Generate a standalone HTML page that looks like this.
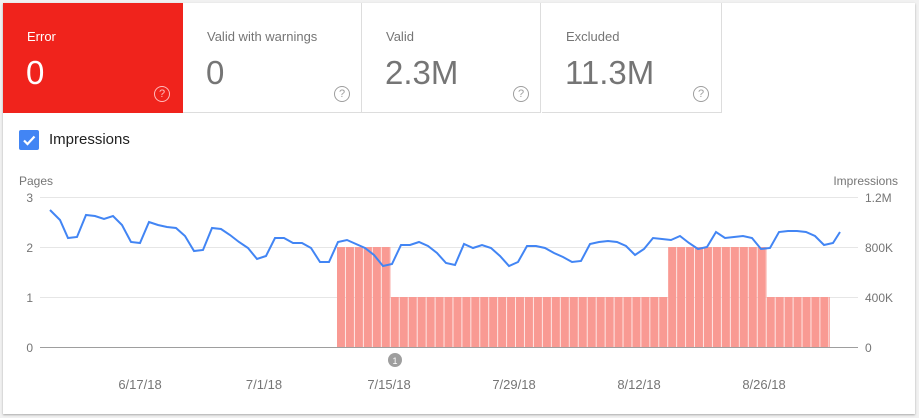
<!DOCTYPE html>
<html><head><meta charset="utf-8"><style>
body{margin:0;width:919px;height:418px;background:#f1f1f1;font-family:"Liberation Sans",Arial,sans-serif;overflow:hidden;position:relative}
.card{position:absolute;left:3px;top:3px;width:912px;height:411px;background:#fff;box-shadow:0 1px 2px rgba(0,0,0,.3)}
.tile{position:absolute;top:3px;height:110px;width:179px;border-right:1px solid #ddd;border-bottom:1px solid #ddd;box-sizing:border-box;color:#757575}
.tile .l{position:absolute;left:24px;top:26px;font-size:13px}
.tile .v{position:absolute;left:23px;top:51px;font-size:33px}
.tile .q{position:absolute;left:151px;top:83px;width:14px;height:14px;border:1.3px solid #9e9e9e;border-radius:50%;font-size:11px;text-align:center;line-height:14px;color:#9e9e9e}
</style></head><body>
<div class="card"></div>
<div class="tile" style="left:3px;background:#f0231c;color:#fff;border:none;width:180px"><div class="l">Error</div><div class="v">0</div><div class="q" style="border-color:#fbb;color:#fbb">?</div></div>
<div class="tile" style="left:183px"><div class="l">Valid with warnings</div><div class="v">0</div><div class="q">?</div></div>
<div class="tile" style="left:362px"><div class="l">Valid</div><div class="v">2.3M</div><div class="q">?</div></div>
<div class="tile" style="left:542px;width:180px"><div class="l">Excluded</div><div class="v">11.3M</div><div class="q">?</div></div>
<div style="position:absolute;left:19px;top:130px;width:20px;height:20px;background:#4285f4;border-radius:2px"></div>
<svg style="position:absolute;left:19px;top:130px" width="20" height="20"><path d="M5 10.5l3.5 3.5 7-7.5" stroke="#fff" stroke-width="2.2" fill="none"/></svg>
<div style="position:absolute;left:49px;top:131px;font-size:15px;color:#212121">Impressions</div>
<svg style="position:absolute;left:0;top:0" width="919" height="418" font-family="Liberation Sans, Arial, sans-serif" font-size="12" fill="#757575">
<defs><pattern id="b" x="337" y="0" width="8.95" height="418" patternUnits="userSpaceOnUse"><rect x="0" y="0" width="8.2" height="418" fill="#f99a93"/></pattern></defs>
<text x="19" y="185">Pages</text>
<text x="898" y="185" text-anchor="end">Impressions</text>
<g stroke="#e6e6e6"><line x1="40" y1="197.5" x2="858" y2="197.5"/><line x1="40" y1="247.5" x2="858" y2="247.5"/><line x1="40" y1="297.5" x2="858" y2="297.5"/></g>
<line x1="40" y1="347.5" x2="858" y2="347.5" stroke="#9e9e9e"/>
<g text-anchor="end"><text x="33" y="202">3</text><text x="33" y="252">2</text><text x="33" y="302">1</text><text x="33" y="352">0</text></g>
<text x="865" y="202">1.2M</text><text x="865" y="252">800K</text><text x="865" y="302">400K</text><text x="865" y="352">0</text>
<rect x="337" y="247" width="54" height="100" fill="url(#b)"/>
<rect x="391" y="297" width="277" height="50" fill="url(#b)"/>
<rect x="668" y="247" width="99" height="100" fill="url(#b)"/>
<rect x="767" y="297" width="63" height="50" fill="url(#b)"/>
<polyline fill="none" stroke="#4285f4" stroke-width="2" points="50,210 60,220 68,238 77,237 86,215 95,216 104,219 113,216 122,225 131,242 140,243 149,222 158,225 167,227 176,228 185,236 194,251 203,250 212,228 221,229 230,235 239,242 248,248 257,259 266,256 275,238 284,238 293,243 302,243 311,248 320,262 329,262 338,242 347,240 356,244 365,248 374,255 383,266 392,264 401,245 410,245 419,242 428,246 437,253 446,263 455,265 464,244 473,248 482,245 491,248 500,256 509,266 518,262 527,246 536,246 545,248 554,253 563,257 572,262 581,261 590,244 599,242 608,241 617,242 626,246 635,255 644,249 653,238 662,239 671,240 680,236 689,243 698,249 707,247 716,232 725,238 734,237 743,236 752,238 761,249 770,248 779,232 788,231 797,231 806,232 815,236 824,245 833,243 840,232"/>
<circle cx="395" cy="360" r="7" fill="#9e9e9e"/><text x="395" y="364" fill="#fff" font-size="9" text-anchor="middle">1</text>
<g text-anchor="middle" font-size="13"><text x="140" y="389">6/17/18</text><text x="264" y="389">7/1/18</text><text x="389" y="389">7/15/18</text><text x="514" y="389">7/29/18</text><text x="639" y="389">8/12/18</text><text x="764" y="389">8/26/18</text></g>
</svg>
</body></html>
